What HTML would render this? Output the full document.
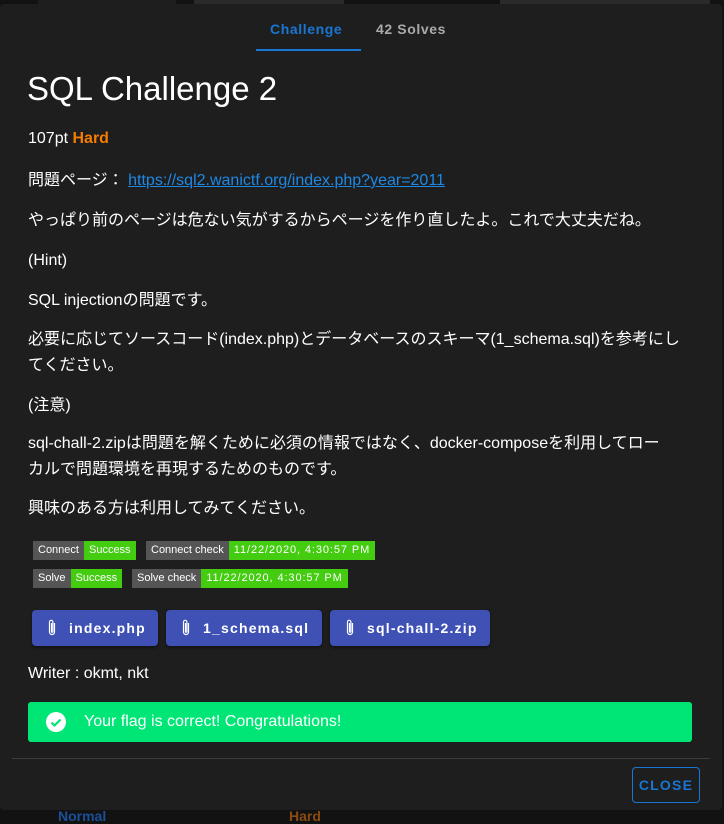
<!DOCTYPE html>
<html><head><meta charset="utf-8"><style>
*{margin:0;padding:0;box-sizing:border-box}
body{width:724px;height:821px;background:#121212;position:relative;overflow:hidden;font-family:"Liberation Sans","Noto Sans CJK JP",sans-serif;color:#fff}
.bg{position:absolute;background:#1e1e1e}
.dlg{position:absolute;left:0;top:4px;width:722px;height:806px;background:#1e1e1e;border-radius:4px}
.a{position:absolute;white-space:nowrap}
.p{position:absolute;left:28px;font-size:16px;color:#fff;line-height:26px}
.tab{position:absolute;top:21px;font-size:14px;font-weight:bold;letter-spacing:.6px}
.bd{position:absolute;height:19px;font-size:11px;line-height:19px;display:flex}
.bd span{padding:0 5px}
.g{background:#555;color:#fff}.s{background:#44cc11;color:#fff}
.dt{letter-spacing:.9px}
.btn{position:absolute;top:610px;height:36px;background:#3f51b5;border-radius:4px;color:#fff;font-size:14px;font-weight:bold;letter-spacing:1.2px;line-height:36px;display:flex;align-items:center;box-shadow:0 2px 3px rgba(0,0,0,.4)}
.btn svg{margin:0 12px 0 15px}
</style></head><body>
<div class="bg" style="left:38px;top:0;width:138px;height:4px"></div>
<div class="bg" style="left:194px;top:0;width:150px;height:4px;background:#2a2a2a"></div>
<div class="bg" style="left:500px;top:0;width:210px;height:4px;background:#2a2a2a"></div>
<div class="a" style="left:58px;top:808px;color:#1a4f9a;font-size:14px;font-weight:bold">Normal</div>
<div class="a" style="left:289px;top:808px;color:#8a4a10;font-size:14px;font-weight:bold">Hard</div>
<div class="dlg"></div>
<div class="tab" style="left:270px;color:#1976d2">Challenge</div>
<div class="tab" style="left:376px;color:#aaa">42 Solves</div>
<div class="a" style="left:256px;top:49px;width:105px;height:2px;background:#1976d2"></div>
<div class="a" style="left:27px;top:70px;font-size:33px;color:#fff">SQL Challenge 2</div>
<div class="p" style="top:126px">107pt <b style="color:#f57c00">Hard</b></div>
<div class="p" style="top:168px">問題ページ： <span style="color:#1e88e5;text-decoration:underline">https://sql2.wanictf.org/index.php?year=2011</span></div>
<div class="p" style="top:208px">やっぱり前のページは危ない気がするからページを作り直したよ。これで大丈夫だね。</div>
<div class="p" style="top:248px">(Hint)</div>
<div class="p" style="top:288px">SQL injectionの問題です。</div>
<div class="p" style="top:327px">必要に応じてソースコード(index.php)とデータベースのスキーマ(1_schema.sql)を参考にし<br>てください。</div>
<div class="p" style="top:393px">(注意)</div>
<div class="p" style="top:431px">sql-chall-2.zipは問題を解くために必須の情報ではなく、docker-composeを利用してロー<br>カルで問題環境を再現するためのものです。</div>
<div class="p" style="top:496px">興味のある方は利用してみてください。</div>
<div class="bd" style="left:33px;top:541px"><span class="g">Connect</span><span class="s">Success</span></div>
<div class="bd" style="left:146px;top:541px"><span class="g">Connect check</span><span class="s dt">11/22/2020, 4:30:57 PM</span></div>
<div class="bd" style="left:33px;top:569px"><span class="g">Solve</span><span class="s">Success</span></div>
<div class="bd" style="left:132px;top:569px"><span class="g">Solve check</span><span class="s dt">11/22/2020, 4:30:57 PM</span></div>
<div class="btn" style="left:32px;width:126px"><svg width="10" height="18" viewBox="0 0 10 18"><path d="M7.5 4v9a2.5 2.5 0 0 1-5 0V3a1.7 1.7 0 0 1 3.4 0v9.5a.7.7 0 0 1-1.4 0V4" fill="none" stroke="#fff" stroke-width="1.2"/></svg>index.php</div>
<div class="btn" style="left:166px;width:156px"><svg width="10" height="18" viewBox="0 0 10 18"><path d="M7.5 4v9a2.5 2.5 0 0 1-5 0V3a1.7 1.7 0 0 1 3.4 0v9.5a.7.7 0 0 1-1.4 0V4" fill="none" stroke="#fff" stroke-width="1.2"/></svg>1_schema.sql</div>
<div class="btn" style="left:330px;width:160px"><svg width="10" height="18" viewBox="0 0 10 18"><path d="M7.5 4v9a2.5 2.5 0 0 1-5 0V3a1.7 1.7 0 0 1 3.4 0v9.5a.7.7 0 0 1-1.4 0V4" fill="none" stroke="#fff" stroke-width="1.2"/></svg>sql-chall-2.zip</div>
<div class="p" style="top:661px">Writer : okmt, nkt</div>
<div class="a" style="left:28px;top:702px;width:664px;height:40px;background:#00e676;border-radius:3px"></div>
<svg class="a" style="left:45px;top:711px" width="22" height="22" viewBox="0 0 22 22"><circle cx="11" cy="11" r="10" fill="#fff"/><path d="M6.5 11.5l3 3 6-6" fill="none" stroke="#00e676" stroke-width="2.2"/></svg>
<div class="a" style="left:84px;top:713px;font-size:16px;color:#fff">Your flag is correct! Congratulations!</div>
<div class="a" style="left:12px;top:758px;width:698px;height:1px;background:#3c3c3c"></div>
<div class="a" style="left:632px;top:767px;width:68px;height:36px;border:1px solid #1976d2;border-radius:4px;color:#1976d2;font-size:14px;font-weight:bold;letter-spacing:1.2px;line-height:34px;text-align:center">CLOSE</div>
</body></html>
